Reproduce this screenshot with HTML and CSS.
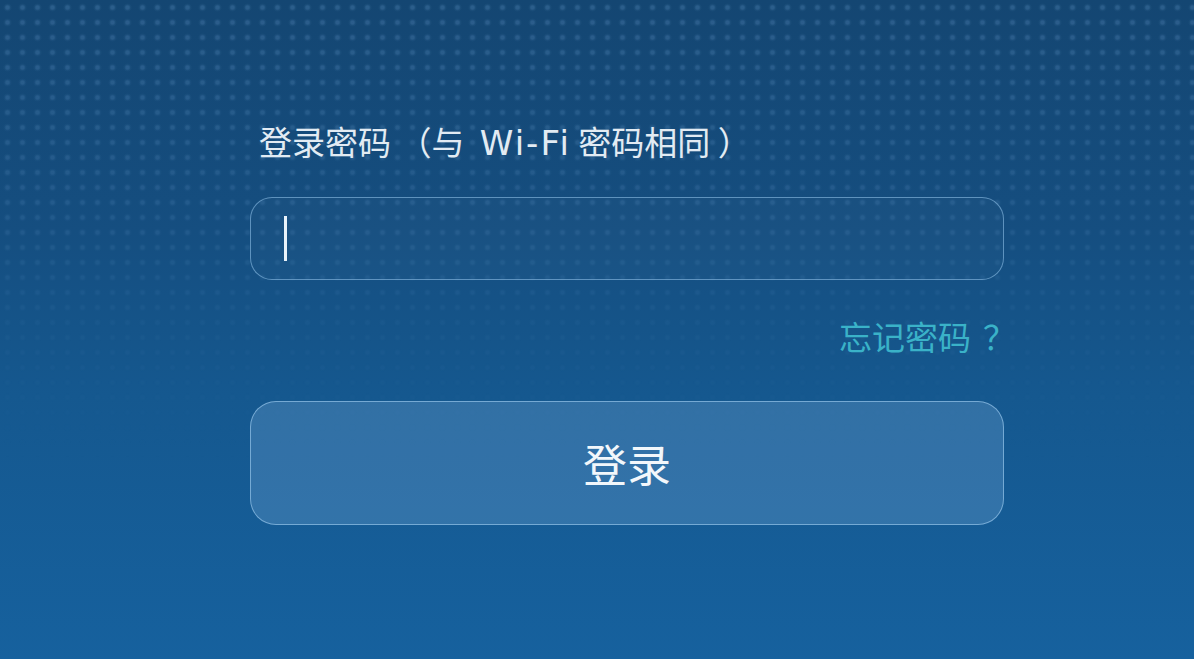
FILE: index.html
```html
<!DOCTYPE html>
<html lang="zh">
<head>
<meta charset="utf-8">
<title>登录</title>
<link rel="stylesheet" href="styles.css">
</head>
<body>
<div class="bg">
  <div class="dots"></div>
  <form class="login">
    <label class="label">登录密码 （与 <span class="latin">Wi-Fi</span> 密码相同 ）</label>
    <div class="field"><span class="caret"></span></div>
    <div class="forgot-row"><a class="forgot">忘记密码<span class="qmark">？</span></a></div>
    <button type="button" class="btn">登录</button>
  </form>
</div>
</body>
</html>
```
FILE: styles.css
```css
html, body {
  margin: 0;
  padding: 0;
  height: 100%;
}
body {
  font-family: "Noto Sans CJK SC", "Noto Sans", sans-serif;
}
.bg {
  position: relative;
  width: 100%;
  height: 100%;
  min-height: 659px;
  overflow: hidden;
  background: linear-gradient(180deg, #144672 0%, #154e80 35%, #15588f 60%, #16619e 100%);
}
.dots {
  position: absolute;
  inset: 0;
  background-image: radial-gradient(circle, rgba(110,160,210,0.26) 0 1.5px, rgba(110,160,210,0.08) 3px, transparent 4.5px);
  background-size: 15px 15px;
  -webkit-mask-image: linear-gradient(180deg, rgba(0,0,0,1) 0%, rgba(0,0,0,0.65) 30%, rgba(0,0,0,0.2) 50%, rgba(0,0,0,0) 70%);
  mask-image: linear-gradient(180deg, rgba(0,0,0,1) 0%, rgba(0,0,0,0.65) 30%, rgba(0,0,0,0.2) 50%, rgba(0,0,0,0) 70%);
}
.login {
  position: relative;
  width: 754px;
  margin-left: 250px;
  padding-top: 121px;
  display: flex;
  flex-direction: column;
}
.label {
  display: block;
  height: 40px;
  color: #e2ebf3;
  font-size: 33px;
  line-height: 40px;
  margin-left: 9px;
  white-space: pre;
}
.latin {
  font-family: "DejaVu Sans", "Noto Sans", sans-serif;
  font-size: 34px;
  line-height: 1;
  letter-spacing: 2px;
  margin-left: 8px;
}
.field {
  box-sizing: border-box;
  margin-top: 36px;
  height: 83px;
  border: 1.5px solid rgba(140,190,230,0.6);
  border-radius: 22px;
  background: rgba(255,255,255,0.02);
  display: flex;
  align-items: center;
  padding-left: 33px;
}
.caret {
  width: 2.5px;
  height: 45px;
  background: #e8f2fa;
}
.forgot-row {
  display: flex;
  justify-content: flex-end;
  margin-top: 36px;
}
.forgot {
  color: #3ab2c8;
  font-size: 33px;
  line-height: 40px;
  white-space: nowrap;
  margin-right: -12px;
  cursor: pointer;
}
.qmark {
  margin-left: 12px;
}
.btn {
  box-sizing: border-box;
  margin-top: 45px;
  height: 124px;
  border: 1.5px solid rgba(160,205,240,0.62);
  border-radius: 26px;
  background: rgba(120,170,215,0.3);
  color: #f2f7fb;
  font-family: "Noto Sans CJK SC", "Noto Sans", sans-serif;
  font-size: 44px;
  padding: 0;
  cursor: pointer;
}
```
